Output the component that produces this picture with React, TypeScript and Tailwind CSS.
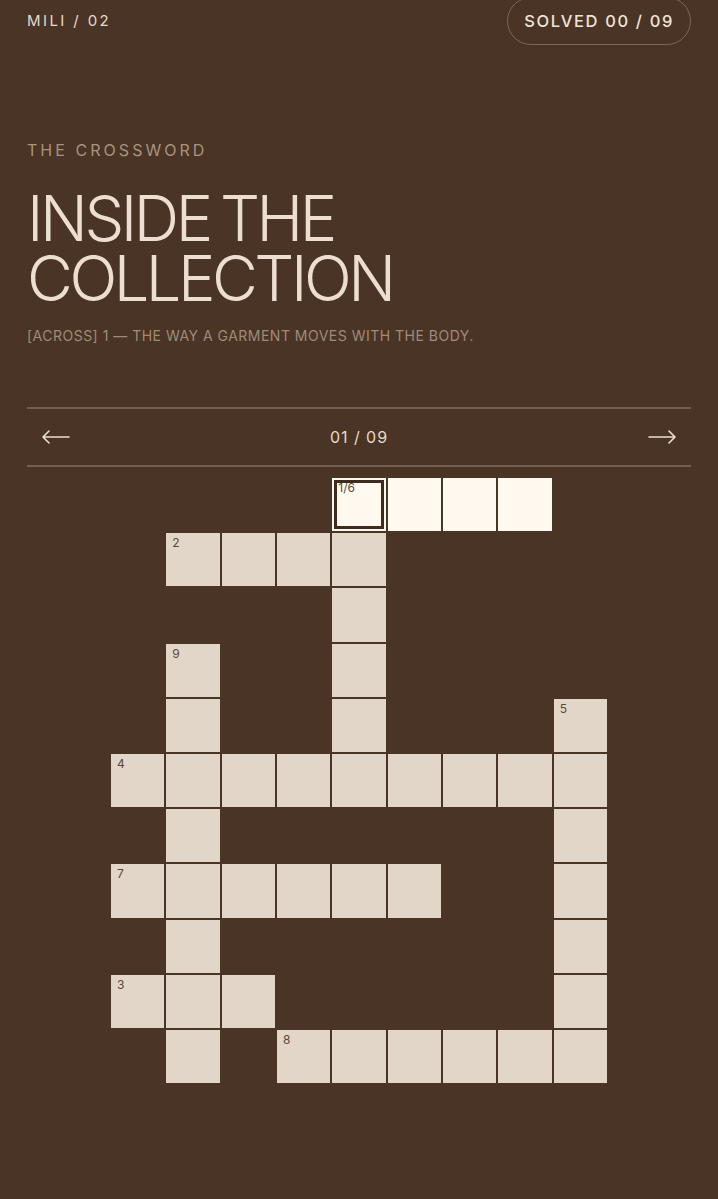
import React from 'react';

// 9 x 11 board: '.' = empty, '#' = cell, 'H' = active word cell
const board = [
  '....HHHH.',
  '.####....',
  '....#....',
  '.#..#....',
  '.#..#...#',
  '#########',
  '.#......#',
  '######..#',
  '.#......#',
  '###.....#',
  '.#.######',
];

const labels: Record<string, string> = {
  '0-4': '1/6',
  '1-1': '2',
  '3-1': '9',
  '4-8': '5',
  '5-0': '4',
  '7-0': '7',
  '9-0': '3',
  '10-3': '8',
};

const ArrowLeft = () => (
  <svg width="30" height="14" viewBox="0 0 30 14" fill="none" stroke="#eadfd2" strokeWidth="1.6" strokeLinecap="round" strokeLinejoin="round">
    <path d="M28 7H2M8 1L2 7l6 6" />
  </svg>
);

const ArrowRight = () => (
  <svg width="30" height="14" viewBox="0 0 30 14" fill="none" stroke="#eadfd2" strokeWidth="1.6" strokeLinecap="round" strokeLinejoin="round">
    <path d="M2 7h26M22 1l6 6-6 6" />
  </svg>
);

export default function App() {
  return (
    <div className="min-h-[1199px] w-full bg-[#4a3425] px-[27px] text-[#e9ddd0] [font-family:Inter,'Liberation_Sans',sans-serif]">
      <header className="flex items-center justify-between">
        <span className="-mt-[3px] text-[15px] tracking-[0.16em] text-[#e6d9cb]">MILI / 02</span>
        <div className="-mt-[3px] flex h-[48px] items-center rounded-full border border-[#7d6856] px-[16px] text-[16.5px] font-medium tracking-[0.1em] text-[#efe4d8]">
          SOLVED 00 / 09
        </div>
      </header>

      <p className="mt-[93px] text-[16px] tracking-[0.19em] text-[#a8937f]">THE CROSSWORD</p>
      <h1 className="mt-[26px] text-[63px] font-light leading-[60px] tracking-[-0.055em] [word-spacing:-4px] text-[#ecdfd2]">
        INSIDE THE
        <br />
        COLLECTION
      </h1>
      <p className="mt-[17px] text-[14px] tracking-[0.035em] text-[#a08b78]">
        [ACROSS] 1 — THE WAY A GARMENT MOVES WITH THE BODY.
      </p>

      <nav className="mt-[61px] flex h-[60px] items-center justify-between border-y-2 border-[#745f4d] px-[14px]">
        <ArrowLeft />
        <span className="text-[16px] tracking-[0.06em] text-[#e6d9cb]">01 / 09</span>
        <ArrowRight />
      </nav>

      <div className="mx-auto mt-[11px] grid w-[496px] grid-cols-9 gap-[2px]">
        {board.map((row, r) =>
          row.split('').map((c, col) => {
            const key = `${r}-${col}`;
            const label = labels[key];
            if (c === '.') return <div key={key} className="h-[53.2px]" />;
            const active = c === 'H';
            const focused = key === '0-4';
            return (
              <div
                key={key}
                className={`relative h-[53.2px] ${active ? 'bg-[#fff9f0]' : 'bg-[#e2d6c9]'} ${focused ? 'p-[2px]' : ''}`}
              >
                {focused && <div className="h-full w-full border-[3px] border-[#3f2c1e]" />}
                {label && (
                  <span className="absolute left-[6px] top-[4px] text-[12px] leading-none text-[#5a4838]">
                    {label}
                  </span>
                )}
              </div>
            );
          })
        )}
      </div>
    </div>
  );
}
